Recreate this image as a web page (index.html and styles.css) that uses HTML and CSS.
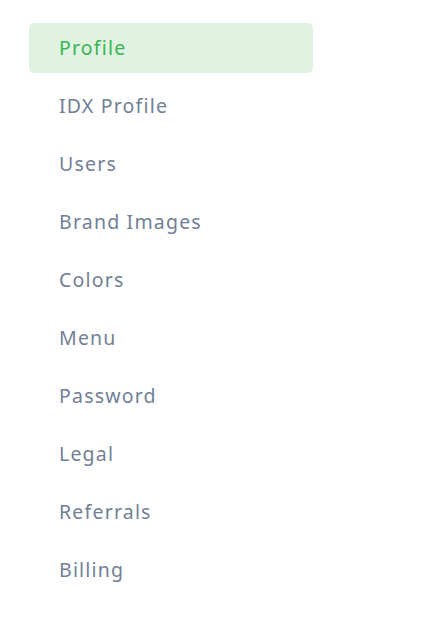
FILE: index.html
```html
<!DOCTYPE html>
<html lang="en">
<head>
    <meta charset="UTF-8">
    <meta name="viewport" content="width=device-width, initial-scale=1.0">
    <title>Settings</title>
    <link rel="stylesheet" href="styles.css">
</head>
<body>

    <nav class="settings-nav">
        <a class="nav-item active" href="#">Profile</a>
        <a class="nav-item" href="#">IDX Profile</a>
        <a class="nav-item" href="#">Users</a>
        <a class="nav-item" href="#">Brand Images</a>
        <a class="nav-item" href="#">Colors</a>
        <a class="nav-item" href="#">Menu</a>
        <a class="nav-item" href="#">Password</a>
        <a class="nav-item" href="#">Legal</a>
        <a class="nav-item" href="#">Referrals</a>
        <a class="nav-item" href="#">Billing</a>
    </nav>

</body>
</html>
```
FILE: styles.css
```css
body {
    font-family: 'Noto Sans', 'Open Sans', sans-serif;
    background-color: #ffffff;
    margin: 0;
}

.settings-nav {
    display: flex;
    flex-direction: column;
    gap: 8px;
    width: 284px;
    padding: 23px 0 0 29px;
}

.nav-item {
    display: flex;
    align-items: center;
    height: 50px;
    box-sizing: border-box;
    padding: 0 0 2px 30px;
    border-radius: 5px;
    font-size: 19.5px;
    font-weight: 400;
    letter-spacing: 1.2px;
    color: #718096;
    text-decoration: none;
}

.nav-item.active {
    background-color: #e0f3e3;
    color: #3bb54f;
}
```
